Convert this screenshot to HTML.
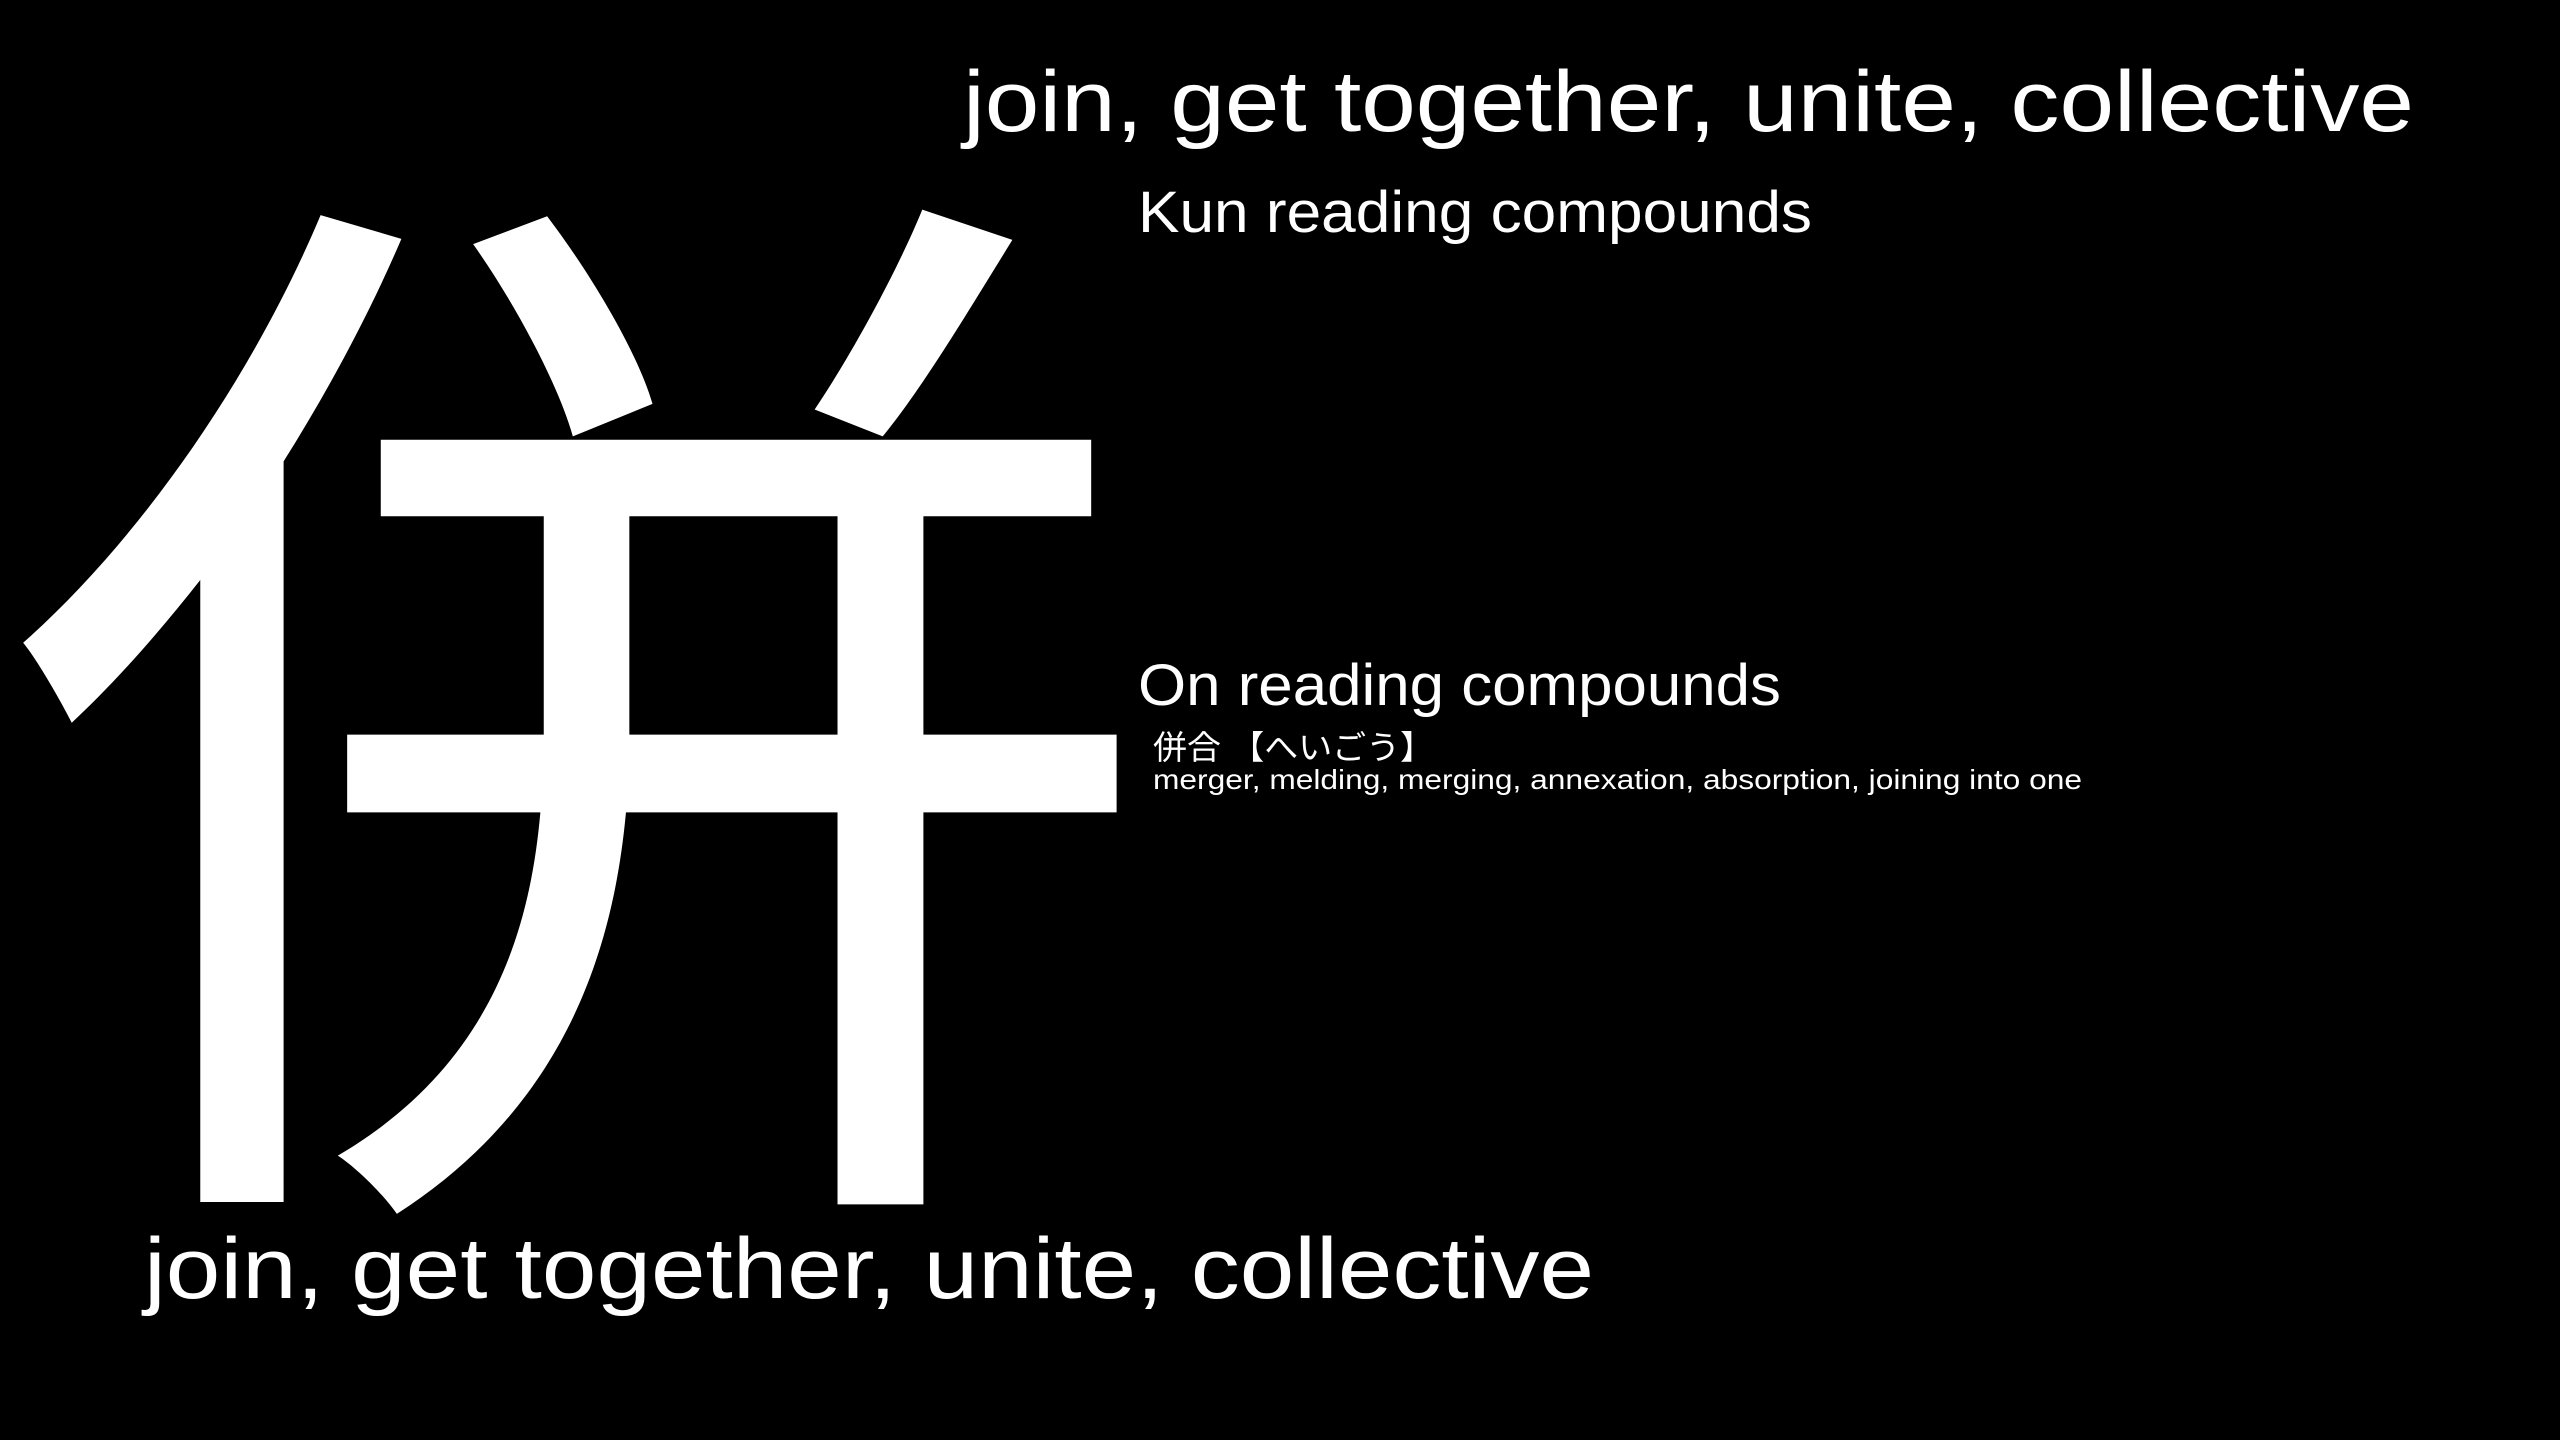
<!DOCTYPE html>
<html><head><meta charset="utf-8"><style>
html,body{margin:0;padding:0;background:#000;width:2560px;height:1440px;overflow:hidden}
svg{display:block}
text{fill:#fff;font-family:"Liberation Sans","Noto Sans CJK JP",sans-serif}
</style></head><body>
<svg width="2560" height="1440" viewBox="0 0 2560 1440" xmlns="http://www.w3.org/2000/svg">
<rect width="2560" height="1440" fill="#000"/>
<text x="0" y="1119" font-size="1080" textLength="1157" lengthAdjust="spacingAndGlyphs" style="font-family:'Noto Sans CJK JP',sans-serif">併</text>
<text x="963" y="131" font-size="86" textLength="1451" lengthAdjust="spacingAndGlyphs">join, get together, unite, collective</text>
<text x="1138" y="232" font-size="58" textLength="674" lengthAdjust="spacingAndGlyphs">Kun reading compounds</text>
<text x="1138" y="705" font-size="58" textLength="643" lengthAdjust="spacingAndGlyphs">On reading compounds</text>
<text x="1153" y="759" font-size="33" textLength="281" lengthAdjust="spacingAndGlyphs">併合 【へいごう】</text>
<text x="1153" y="789" font-size="28" textLength="929" lengthAdjust="spacingAndGlyphs">merger, melding, merging, annexation, absorption, joining into one</text>
<text x="144" y="1298" font-size="86" textLength="1450" lengthAdjust="spacingAndGlyphs">join, get together, unite, collective</text>
</svg>
</body></html>
